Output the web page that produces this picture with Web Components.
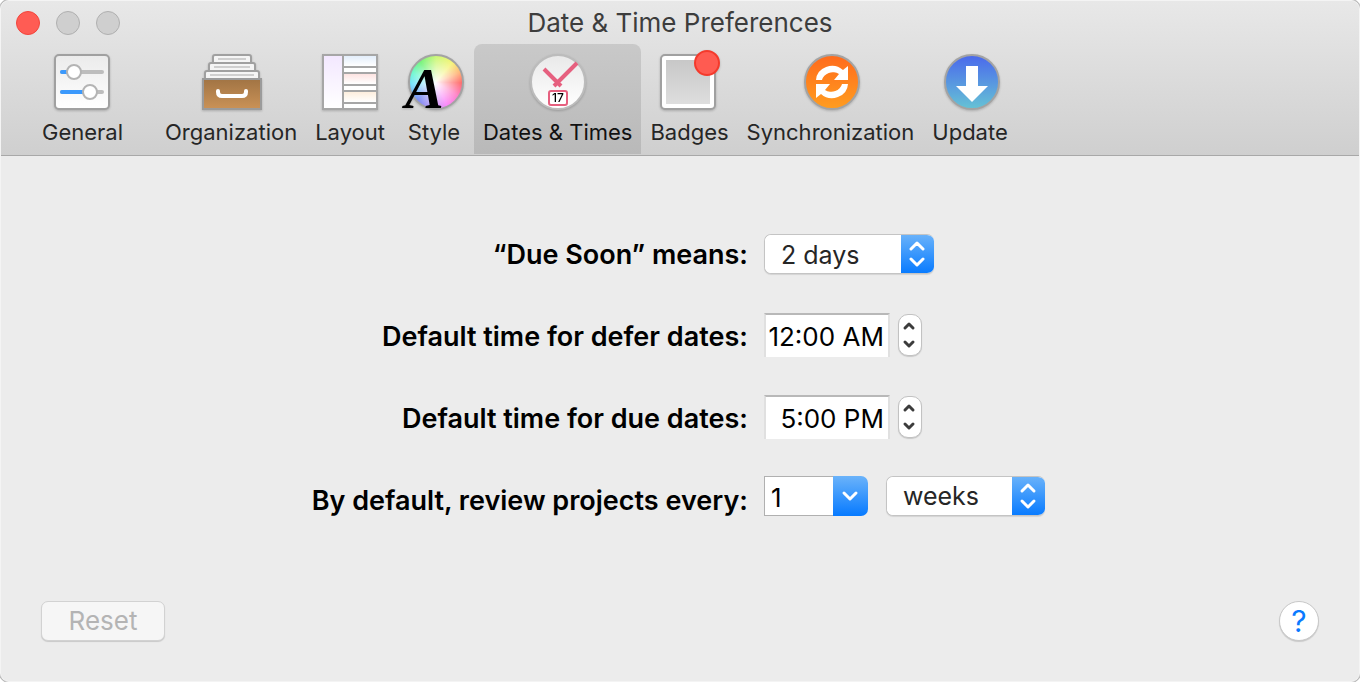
<!DOCTYPE html>
<html lang="en">
<head>
<meta charset="utf-8">
<title>Date &amp; Time Preferences</title>
<style>
  body {
    margin: 0;
    background: #fff;
    font-family: Inter, "Liberation Sans", sans-serif;
  }
</style>
</head>
<body>
<prefs-window></prefs-window>

<script>
const define = (name, html, setup) => {
  const template = document.createElement('template');
  template.innerHTML = html;
  customElements.define(name, class extends HTMLElement {
    constructor() {
      super();
      const shadow = this.attachShadow({ mode: 'open' });
      shadow.appendChild(template.content.cloneNode(true));
    }
    connectedCallback() {
      if (setup) setup(this, this.shadowRoot);
    }
  });
};

// toolbar icons, all drawn on a 64x60 canvas
const icons = {
  general: `
    <defs><linearGradient id="g" x2="0" y2="1"><stop stop-color="#ebebeb"/><stop offset="1" stop-color="#fff"/></linearGradient></defs>
    <rect x="4" y="3" width="54" height="54" rx="4" fill="url(#g)" stroke="#a0a0a0" stroke-width="2"/>
    <g stroke-width="4" stroke-linecap="round">
      <path d="M11 20h40M11 40h40" stroke="#bdbdbd"/>
      <path d="M11 20h10M11 40h24" stroke="#3b99fc"/>
    </g>
    <g fill="#fff" stroke="#b4b4b4" stroke-width="2"><circle cx="23" cy="20" r="7"/><circle cx="39" cy="40" r="7"/></g>`,
  organization: `
    <defs><linearGradient id="g" x2="0" y2="1"><stop stop-color="#a17444"/><stop offset="1" stop-color="#ca9257"/></linearGradient></defs>
    <g transform="translate(1 0)">
      <g fill="#f5f5f5" stroke="#a0a0a0" stroke-width="2">
        <rect x="13" y="3" width="38" height="12" rx="2"/>
        <rect x="9" y="11" width="46" height="12" rx="2"/>
        <rect x="5" y="19" width="54" height="12" rx="2"/>
      </g>
      <path d="M18 7h28M14 15h36M10 23h44" stroke="#cfcfcf" stroke-width="2"/>
      <rect x="3" y="27" width="58" height="30" fill="url(#g)" stroke="#9b9b9b" stroke-width="2"/>
      <path d="M18 39v1q0 4 4 4h20q4 0 4-4v-1" fill="none" stroke="#fff" stroke-width="4" stroke-linecap="round"/>
    </g>`,
  layout: `
    <defs>
      <linearGradient id="v" x2="0" y2="1"><stop stop-color="#f3e8ff"/><stop offset="1" stop-color="#fff"/></linearGradient>
      <linearGradient id="b" x2="0" y2="1"><stop stop-color="#e3eefb"/><stop offset="1" stop-color="#fff"/></linearGradient>
      <linearGradient id="r" x2="0" y2="1"><stop stop-color="#fde3e1"/><stop offset="1" stop-color="#fff"/></linearGradient>
      <linearGradient id="o" x2="0" y2="1"><stop stop-color="#fdeedd"/><stop offset="1" stop-color="#fff"/></linearGradient>
    </defs>
    <path fill="#a6a6a6" d="M4 2h56v56H4z"/>
    <path fill="url(#v)" d="M6 4h18v52H6z"/>
    <path fill="url(#b)" d="M26 4h32v10H26z"/>
    <path fill="#fff" d="M26 16h32v4H26zM26 34h32v4H26zM26 52h32v4H26z"/>
    <path fill="url(#r)" d="M26 22h32v10H26z"/>
    <path fill="url(#o)" d="M26 40h32v10H26z"/>`,
  style: `
    <foreignObject x="5" y="1" width="58" height="58">
      <div style="box-sizing:border-box;width:56px;height:56px;margin:1px;border:2px solid #a3a3a3;border-radius:50%;background:radial-gradient(circle at 48% 52%,#fff,#fffa 28%,#fff1 80%),conic-gradient(#c0f658,#f2f25e 40deg,#ffa65f 68deg,#ff4a4a 92deg,#ff60b8 122deg,#fa66f8 155deg,#a47af5 190deg,#4c62f0 225deg,#43d9fb 265deg,#45f5c5 290deg,#52f05a 322deg,#c0f658)"></div>
    </foreignObject>
    <text x="3" y="56" font-family="Liberation Serif" font-size="58" font-weight="700" font-style="italic">A</text>`,
  dates: `
    <defs><linearGradient id="g" x2="0" y2="1"><stop stop-color="#e9e9e9"/><stop offset="1" stop-color="#fff"/></linearGradient></defs>
    <circle cx="32" cy="30" r="27" fill="url(#g)" stroke="#bcbcbc" stroke-width="2"/>
    <path d="M18 17l17 17M51 11L28 34" fill="none" stroke="#e6607f" stroke-width="4"/>
    <rect x="23" y="39" width="18" height="14" rx="2" fill="#fff" stroke="#e6607f" stroke-width="2"/>
    <text x="32" y="50" font-size="12" font-weight="500" text-anchor="middle">17</text>`,
  badges: `
    <defs><linearGradient id="g" x2="0" y2="1"><stop stop-color="#c8c8c8"/><stop offset="1" stop-color="#dedede"/></linearGradient></defs>
    <rect x="3" y="3" width="54" height="54" rx="4" fill="#fff" stroke="#a0a0a0" stroke-width="2"/>
    <path fill="url(#g)" d="M8 8h44v44H8z"/>
    <circle cx="49" cy="11" r="12" fill="#ff5b51" stroke="#f43a2c" stroke-width="2"/>`,
  sync: `
    <defs><linearGradient id="g" x2="0" y2="1"><stop stop-color="#ff6a1c"/><stop offset="1" stop-color="#ff9d20"/></linearGradient></defs>
    <g transform="translate(2 0)">
      <circle cx="32" cy="30" r="27" fill="url(#g)" stroke="#a3a3a3" stroke-width="2"/>
      <path fill="#fff" d="M16 28A16 15 0 0 1 43 18L48 14V28H34L39 22A11 10 0 0 0 22 28Z"/>
      <path fill="#fff" transform="rotate(180 32 30)" d="M16 28A16 15 0 0 1 43 18L48 14V28H34L39 22A11 10 0 0 0 22 28Z"/>
    </g>`,
  update: `
    <defs><linearGradient id="g" x2="0" y2="1"><stop stop-color="#4a68ec"/><stop offset="1" stop-color="#66c3d5"/></linearGradient></defs>
    <g transform="translate(2 0)">
      <circle cx="32" cy="30" r="27" fill="url(#g)" stroke="#a3a3a3" stroke-width="2"/>
      <path fill="#fff" d="M26 14h12v20h10L32 50 16 34h10z"/>
    </g>`
};

define('tool-tab', `
  <style>
    :host {
      display: block;
    }
    :host([icon="general"]) {
      margin-right: 24px;
    }
    button {
      display: flex;
      flex-direction: column;
      align-items: center;
      box-sizing: border-box;
      min-width: 80px;
      height: 110px;
      padding: 8px 9px 0;
      border: 0;
      border-radius: 8px 8px 0 0;
      background: none;
      font: 22px/28px Inter, "Liberation Sans", sans-serif;
      color: #262626;
      white-space: nowrap;
    }
    :host([selected]) button {
      background: linear-gradient(#c9c9c9, #b9b9b9);
      color: #111;
    }
    svg {
      display: block;
      width: 60px;
      height: 60px;
      margin-bottom: 6px;
      overflow: visible;
      filter: drop-shadow(0 1px 1px rgba(0, 0, 0, 0.2));
    }
  </style>
  <button type="button"><svg viewBox="2 0 60 60" aria-hidden="true"></svg><slot></slot></button>
`, (host, root) => {
  root.querySelector('svg').innerHTML = icons[host.getAttribute('icon')];
  root.querySelector('button').setAttribute('aria-pressed', host.hasAttribute('selected'));
});

define('title-bar', `
  <style>
    :host {
      display: grid;
      grid-template-columns: 1fr auto 1fr;
      align-items: center;
      height: 43px;
      padding: 0 15px;
    }
    .lights {
      display: flex;
      gap: 16px;
    }
    button {
      box-sizing: border-box;
      width: 24px;
      height: 24px;
      padding: 0;
      border: 1px solid #b0b0b0;
      border-radius: 50%;
      background: #cfcfcf;
    }
    .close {
      border-color: #f2453c;
      background: #ff5c54;
    }
    h1 {
      margin: 0;
      font-size: 26px;
      line-height: 32px;
      font-weight: 400;
      color: #3d3d3d;
    }
  </style>
  <div class="lights">
    <button type="button" class="close" aria-label="Close"></button>
    <button type="button" disabled aria-label="Minimize"></button>
    <button type="button" disabled aria-label="Zoom"></button>
  </div>
  <h1><slot></slot></h1>
`);

define('pref-row', `
  <style>
    :host {
      display: grid;
      grid-template-columns: 55% 1fr;
      column-gap: 16px;
      align-items: center;
      min-height: 48px;
    }
    label {
      padding-top: 2px;
      text-align: right;
      font-size: 27px;
      line-height: 32px;
      font-weight: 600;
      color: #000;
    }
    .controls {
      display: flex;
      align-items: center;
      gap: 18px;
    }
    :host([kind="time"]) .controls {
      gap: 8px;
      padding-bottom: 2px;
    }
    :host([kind="review"]) .controls {
      align-self: start;
    }
    input, select {
      box-sizing: border-box;
      margin: 0;
      border-radius: 0;
      outline: 0;
      font: 25px/32px Inter, "Liberation Sans", sans-serif;
      color: #000;
      background: #fff;
    }
    .popup {
      position: relative;
      display: flex;
      border-radius: 7px;
      overflow: hidden;
      border: 1px solid #c4c4c4;
      border-right: 0;
      background: #fff;
      box-shadow: 0 1px 1px rgba(0, 0, 0, 0.1);
    }
    select {
      appearance: none;
      height: 38px;
      width: 169px;
      padding: 2px 48px 0 16px;
      border: 0;
      color: #262626;
    }
    .review-unit select {
      width: 158px;
      padding-top: 0;
    }
    .arrows {
      position: absolute;
      top: -1px;
      right: 0;
      bottom: -1px;
      width: 33px;
      pointer-events: none;
      background: linear-gradient(#6bb3fa, #077aff);
    }
    svg {
      display: block;
      fill: none;
      stroke-linecap: round;
      stroke-linejoin: round;
    }
    .time {
      width: 126px;
      height: 44px;
      padding: 0 4px 0 0;
      text-align: right;
      border: 2px solid #e0e0e0;
      border-top-color: #b8b8b8;
      border-bottom: 0;
      font-size: 26px;
    }
    .stepper {
      display: flex;
      flex-direction: column;
      box-sizing: border-box;
      width: 24px;
      height: 42px;
      border: 1px solid #c2c2c2;
      border-radius: 10px;
      background: #fff;
      box-shadow: 0 1px 1px rgba(0, 0, 0, 0.15);
    }
    .stepper button {
      flex: 1;
      padding: 0;
      border: 0;
      background: none;
    }
    .combo {
      display: flex;
      height: 40px;
    }
    .combo input {
      width: 69px;
      padding: 4px 6px 0;
      border: 1px solid #b0b0b0;
      border-right: 0;
      font-size: 26px;
    }
    .combo button {
      width: 35px;
      padding: 0;
      border: 0;
      border-radius: 0 7px 7px 0;
      background: linear-gradient(#6bb3fa, #077aff);
    }
  </style>
  <label for="field"><slot></slot></label>
  <div class="controls"></div>
`, (host, root) => {
  const value = host.getAttribute('value');
  const popup = (id, text, extra) => `
    <div class="popup ${extra}">
      <select ${id}><option>${text}</option></select>
      <span class="arrows"><svg width="33" height="40" viewBox="0 0 33 40" stroke="#fff" stroke-width="3"><path d="M10 15l6-6 6 6M10 25l6 6 6-6"/></svg></span>
    </div>`;
  const kinds = {
    popup: () => popup('id="field"', value, ''),
    time: () => `
      <input id="field" class="time" type="text" value="${value}">
      <div class="stepper">
        <button type="button" aria-label="Later"><svg width="22" height="20" stroke="#3c3c3c" stroke-width="3"><path d="M6 13l4-4 4 4"/></svg></button>
        <button type="button" aria-label="Earlier"><svg width="22" height="20" stroke="#3c3c3c" stroke-width="3"><path d="M6 7l4 4 4-4"/></svg></button>
      </div>`,
    review: () => `
      <div class="combo">
        <input id="field" type="text" value="${value}">
        <button type="button" aria-label="Show choices"><svg width="35" height="40" stroke="#fff" stroke-width="3"><path d="M11 17l6 6 6-6"/></svg></button>
      </div>
      ${popup('aria-label="Review unit"', host.getAttribute('unit'), 'review-unit')}`
  };
  root.querySelector('.controls').innerHTML = kinds[host.getAttribute('kind')]();
});

define('prefs-window', `
  <style>
    :host {
      display: flex;
      flex-direction: column;
      box-sizing: border-box;
      min-height: 100vh;
      border: 1px solid #f4f4f4;
      border-radius: 9px;
      overflow: hidden;
      background: #ececec;
      box-shadow: 0 0 0 1px #bbb;
    }
    header {
      background: linear-gradient(#e8e8e8, #cfcfcf);
      border-bottom: 1px solid #a8a8a8;
    }
    nav {
      display: flex;
      padding: 0 0 1px 32px;
    }
    main {
      display: flex;
      flex-direction: column;
      gap: 34px;
      padding-top: 74px;
    }
    footer {
      display: flex;
      justify-content: space-between;
      margin-top: auto;
      padding: 40px;
    }
    footer button {
      box-sizing: border-box;
      height: 40px;
      padding: 0;
      border: 1px solid #c8c8c8;
      background: #fff;
      box-shadow: 0 1px 1px rgba(0, 0, 0, 0.15);
      font: 26px/32px Inter, "Liberation Sans", sans-serif;
    }
    .reset {
      width: 124px;
      border-color: #d2d2d2;
      border-radius: 7px;
      background: #f6f6f6;
      color: #b4b4b4;
    }
    .help {
      width: 40px;
      border-radius: 50%;
      font-size: 30px;
      color: #0a7aff;
    }
  </style>
  <header>
    <title-bar>Date &amp; Time Preferences</title-bar>
    <nav>
      <tool-tab icon="general">General</tool-tab>
      <tool-tab icon="organization">Organization</tool-tab>
      <tool-tab icon="layout">Layout</tool-tab>
      <tool-tab icon="style">Style</tool-tab>
      <tool-tab icon="dates" selected>Dates &amp; Times</tool-tab>
      <tool-tab icon="badges">Badges</tool-tab>
      <tool-tab icon="sync">Synchronization</tool-tab>
      <tool-tab icon="update">Update</tool-tab>
    </nav>
  </header>
  <main>
    <pref-row kind="popup" value="2 days">“Due Soon” means:</pref-row>
    <pref-row kind="time" value="12:00 AM">Default time for defer dates:</pref-row>
    <pref-row kind="time" value="5:00 PM">Default time for due dates:</pref-row>
    <pref-row kind="review" value="1" unit="weeks">By default, review projects every:</pref-row>
  </main>
  <footer>
    <button type="button" class="reset" disabled>Reset</button>
    <button type="button" class="help" aria-label="Help">?</button>
  </footer>
`);
</script>
</body>
</html>
